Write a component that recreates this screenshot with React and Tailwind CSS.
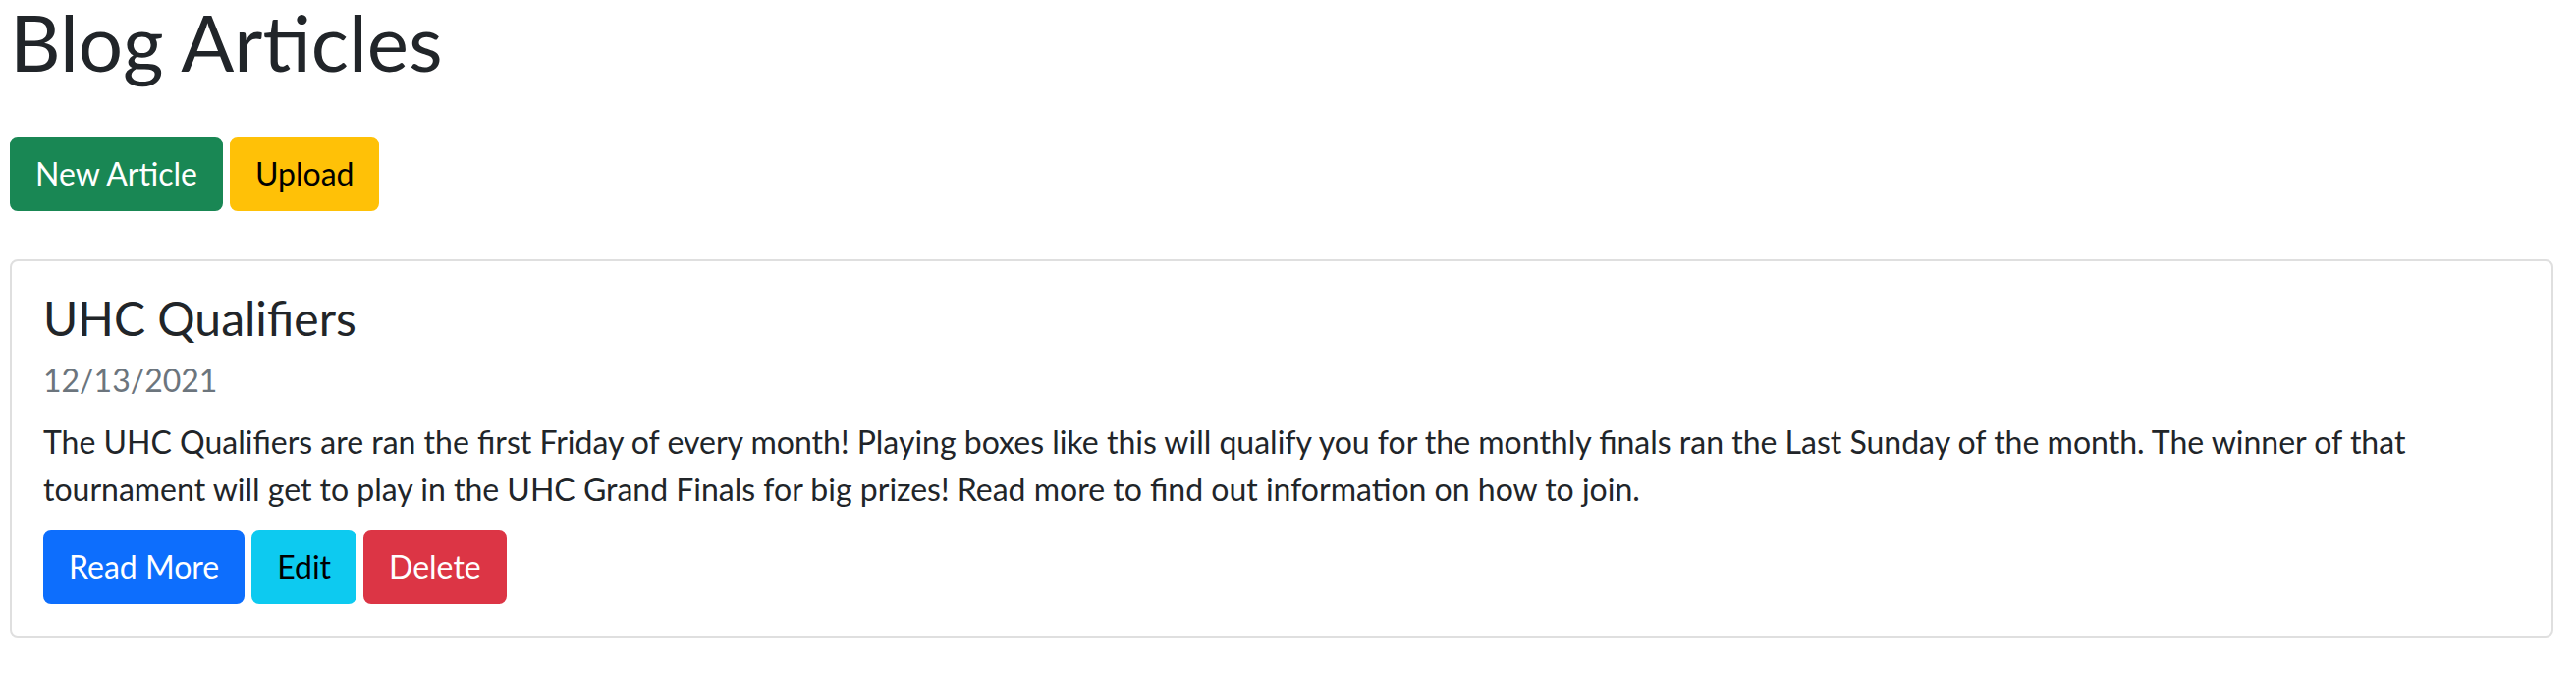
import React from "react";

function Btn({ className, children }) {
  return (
    <button
      type="button"
      className={
        "border-2 rounded-[8px] px-[24px] py-[12px] text-[32px] leading-[48px] font-normal " +
        className
      }
    >
      {children}
    </button>
  );
}

export default function App() {
  return (
    <div className="min-h-[693px] bg-white pl-[10px] pr-[23px] font-['Lato',sans-serif] text-[#212529]">
      <h1 className="m-0 text-[80px] leading-[84px] font-normal">Blog Articles</h1>

      <div className="mt-[55px] flex gap-[7px]">
        <Btn className="bg-[#198754] border-[#198754] text-white">New Article</Btn>
        <Btn className="bg-[#ffc107] border-[#ffc107] text-black">Upload</Btn>
      </div>

      <div className="mt-[49px] rounded-[8px] border-2 border-[#dfdfdf] p-[32px]">
        <h4 className="m-0 text-[48px] leading-[52px] font-normal">UHC Qualifiers</h4>
        <div className="mt-[13px] text-[32px] leading-[48px] text-[#6c757d]">12/13/2021</div>
        <p className="mt-[15px] mb-0 text-[32px] leading-[48px]">
          The UHC Qualifiers are ran the first Friday of every month! Playing boxes like this will qualify you for the
          monthly finals ran the Last Sunday of the month. The winner of that tournament will get to play in the UHC
          Grand Finals for big prizes! Read more to find out information on how to join.
        </p>
        <div className="mt-[17px] flex gap-[7px]">
          <Btn className="bg-[#0d6efd] border-[#0d6efd] text-white">Read More</Btn>
          <Btn className="bg-[#0dcaf0] border-[#0dcaf0] text-black">Edit</Btn>
          <Btn className="bg-[#dc3545] border-[#dc3545] text-white">Delete</Btn>
        </div>
      </div>
    </div>
  );
}
